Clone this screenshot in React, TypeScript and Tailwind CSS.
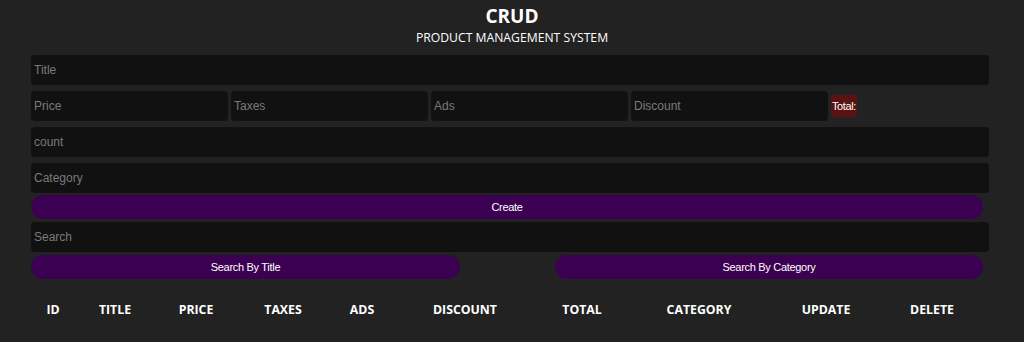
const inputCls =
  "block w-full h-[30px] rounded-[4px] bg-[#111111] px-[3px] text-[12px] text-white outline-none placeholder:text-[#7a7a7a] font-['Liberation_Sans',Arial,sans-serif]";

const btnCls =
  "h-[24px] rounded-full bg-[#3b0051] text-[11px] tracking-[-0.3px] text-white font-['Liberation_Sans',Arial,sans-serif]";

const columns: { label: string; w: string }[] = [
  { label: "ID", w: "w-[44px]" },
  { label: "TITLE", w: "w-[80px]" },
  { label: "PRICE", w: "w-[82px]" },
  { label: "TAXES", w: "w-[92px]" },
  { label: "ADS", w: "w-[66px]" },
  { label: "DISCOUNT", w: "w-[140px]" },
  { label: "TOTAL", w: "w-[94px]" },
  { label: "CATEGORY", w: "w-[140px]" },
  { label: "UPDATE", w: "w-[114px]" },
  { label: "DELETE", w: "w-[98px]" },
];

export default function App() {
  return (
    <div className="min-h-[342px] w-full bg-[#222222] text-white font-['Open_Sans',sans-serif]">
      {/* Header */}
      <div className="flex flex-col items-center pt-[4px]">
        <h1 className="text-[19px] font-bold leading-[24px]">CRUD</h1>
        <p className="text-[12.2px] leading-[18px] mt-[1px]">PRODUCT MANAGEMENT SYSTEM</p>
      </div>

      {/* Form */}
      <div className="pl-[31px] pr-[35px] mt-[8px]">
        <input className={inputCls} placeholder="Title" />

        <div className="flex items-center gap-[3px] mt-[6px]">
          <input className={`${inputCls} !w-[197px]`} placeholder="Price" />
          <input className={`${inputCls} !w-[197px]`} placeholder="Taxes" />
          <input className={`${inputCls} !w-[197px]`} placeholder="Ads" />
          <input className={`${inputCls} !w-[197px]`} placeholder="Discount" />
          <span className="h-[22px] px-[1px] rounded-[3px] bg-[#5a1313] text-[11px] tracking-[-0.4px] leading-[22px] font-['Liberation_Sans',Arial,sans-serif]">
            Total:
          </span>
        </div>

        <input className={`${inputCls} mt-[6px]`} placeholder="count" />
        <input className={`${inputCls} mt-[6px]`} placeholder="Category" />

        <button className={`${btnCls} w-[952px] mt-[2px]`}>Create</button>

        <input className={`${inputCls} mt-[3px]`} placeholder="Search" />

        <div className="flex justify-between w-[952px] mt-[3px]">
          <button className={`${btnCls} w-[429px]`}>Search By Title</button>
          <button className={`${btnCls} w-[428px]`}>Search By Category</button>
        </div>

        {/* Table header */}
        <div className="flex mt-[22px]">
          {columns.map((c) => (
            <div key={c.label} className={`${c.w} text-center text-[12.3px] font-bold leading-[18px]`}>
              {c.label}
            </div>
          ))}
        </div>
      </div>
    </div>
  );
}
